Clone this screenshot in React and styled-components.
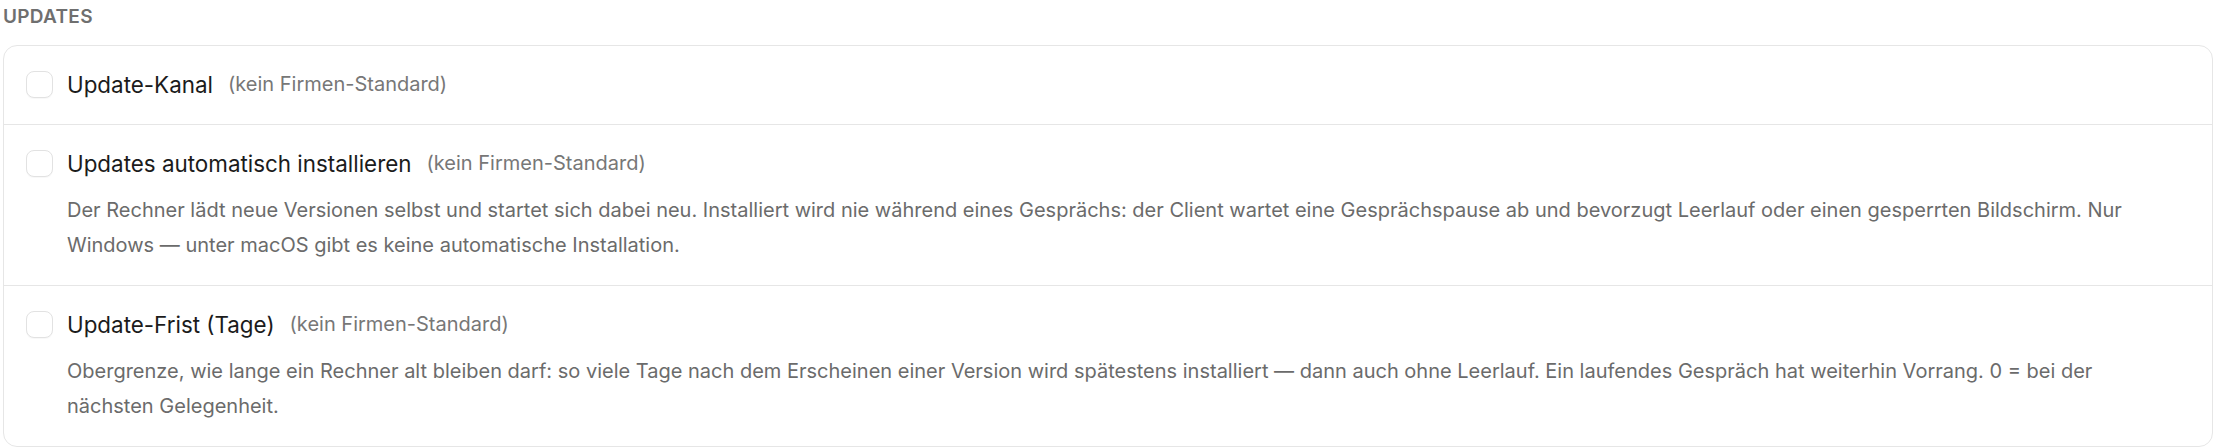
import React from 'react';
import styled, { createGlobalStyle } from 'styled-components';

const GlobalStyle = createGlobalStyle`
  html, body {
    margin: 0;
    padding: 0;
    background: #ffffff;
  }
  body {
    font-family: Inter, "Noto Sans", "Liberation Sans", sans-serif;
    -webkit-font-smoothing: antialiased;
  }
`;

const Page = styled.div`
  padding: 5px 3px 0 3px;
`;

const SectionLabel = styled.div`
  font-size: 19px;
  line-height: 24px;
  font-weight: 600;
  letter-spacing: 0.015em;
  color: #6f6f6f;
  text-transform: uppercase;
  margin: 0 0 16px 0;
`;

const Card = styled.div`
  border: 1.4px solid #e6e6e6;
  border-radius: 14px;
  background: #ffffff;
  overflow: hidden;
`;

const Row = styled.div`
  padding: 25px 22px ${(p) => (p.$hasDesc ? '22px' : '26px')} 22px;
  border-top: ${(p) => (p.$first ? 'none' : '1.4px solid #e6e6e6')};
`;

const Head = styled.div`
  display: flex;
  align-items: center;
  height: 27px;
`;

const Check = styled.span`
  width: 27px;
  height: 27px;
  box-sizing: border-box;
  border: 1.4px solid #e2e2e2;
  border-radius: 8px;
  background: #ffffff;
  box-shadow: 0 1px 1px rgba(0, 0, 0, 0.03);
  flex-shrink: 0;
  margin-right: 14px;
`;

const Title = styled.span`
  font-size: 22.4px;
  line-height: 27px;
  color: #1b1b1b;
`;

const Note = styled.span`
  font-size: 20px;
  line-height: 27px;
  color: #777777;
  margin-left: 15px;
`;

const Desc = styled.p`
  margin: 16px 52px 0 41px;
  font-size: 20px;
  line-height: 35px;
  color: #6b6b6b;
`;

const settings = [
  {
    id: 'channel',
    title: 'Update-Kanal',
  },
  {
    id: 'auto',
    title: 'Updates automatisch installieren',
    desc: 'Der Rechner lädt neue Versionen selbst und startet sich dabei neu. Installiert wird nie während eines Gesprächs: der Client wartet eine Gesprächspause ab und bevorzugt Leerlauf oder einen gesperrten Bildschirm. Nur Windows — unter macOS gibt es keine automatische Installation.',
  },
  {
    id: 'deadline',
    title: 'Update-Frist (Tage)',
    desc: 'Obergrenze, wie lange ein Rechner alt bleiben darf: so viele Tage nach dem Erscheinen einer Version wird spätestens installiert — dann auch ohne Leerlauf. Ein laufendes Gespräch hat weiterhin Vorrang. 0 = bei der nächsten Gelegenheit.',
  },
];

export default function App() {
  return (
    <>
      <GlobalStyle />
      <Page>
        <SectionLabel>Updates</SectionLabel>
        <Card>
          {settings.map((s, i) => (
            <Row key={s.id} $first={i === 0} $hasDesc={!!s.desc}>
              <Head>
                <Check />
                <Title>{s.title}</Title>
                <Note>(kein Firmen-Standard)</Note>
              </Head>
              {s.desc && <Desc>{s.desc}</Desc>}
            </Row>
          ))}
        </Card>
      </Page>
    </>
  );
}
